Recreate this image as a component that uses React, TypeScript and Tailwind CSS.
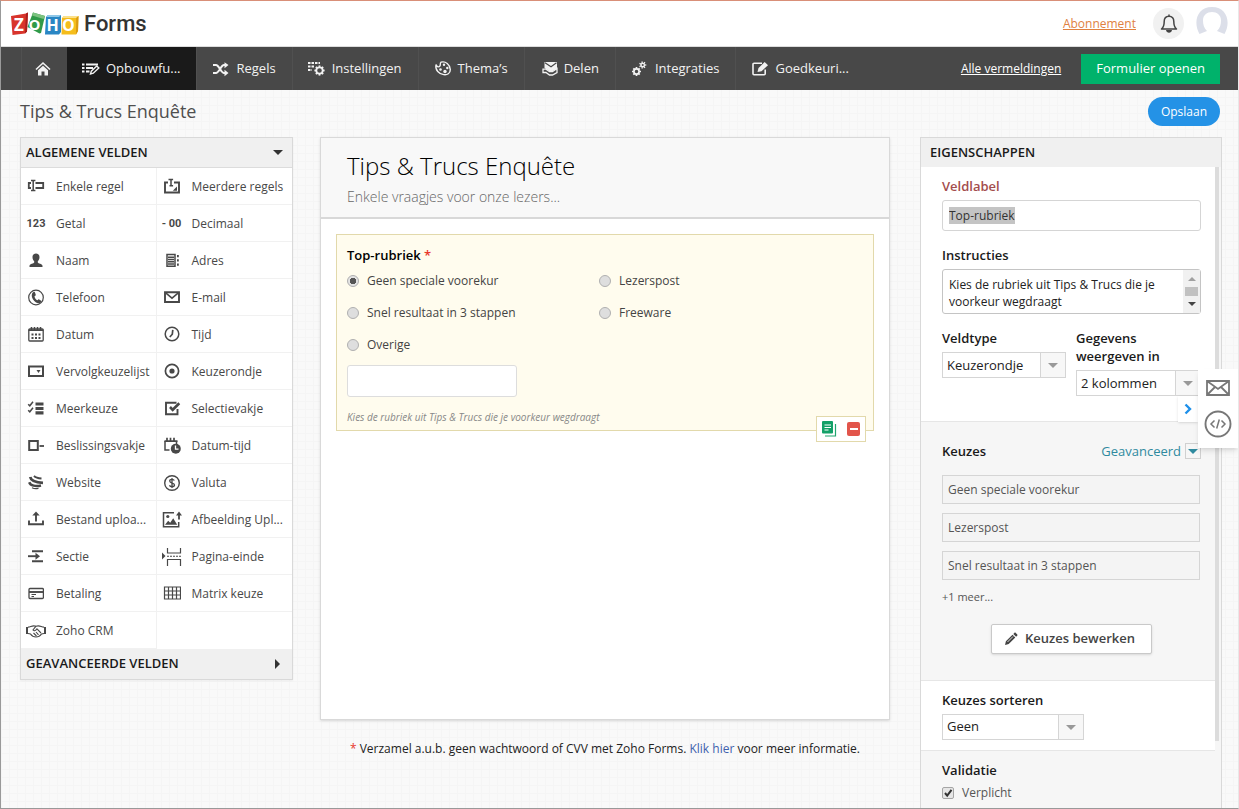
import { useEffect, useRef } from 'react'
import type { ReactNode } from 'react'

const Svg = ({ children, w = 18, h = 18 }: { children: ReactNode; w?: number; h?: number }) => (
  <svg width={w} height={h} viewBox={`0 0 ${w} ${h}`} fill="none" stroke="currentColor" strokeWidth="1.5" aria-hidden="true">
    {children}
  </svg>
)

const solid = { fill: 'currentColor', stroke: 'none' }

const icons: Record<string, ReactNode> = {
  line: (
    <Svg>
      <path d="M4 5H1.800v5H4M8.500 5h7.700v5H8.500" strokeWidth="1.800" />
      <path d="M4 2.500h4.400M4 12.500h4.400M6.200 2.500v10" strokeWidth="1.500" />
    </Svg>
  ),
  lines: (
    <Svg>
      <path d="M5 4.500H2v10h14v-10h-5" strokeWidth="1.900" />
      <path d="M5.500 1.500h4.600M6.500 7.800h3.600M8 1.500v6.300" strokeWidth="1.500" />
      <path d="M14 8.500v4.200H9.800z" {...solid} />
    </Svg>
  ),
  number: <span className="font-['Liberation_Sans_Narrow','Roboto',sans-serif] text-[11px] leading-4 font-bold">123</span>,
  decimal: <span className="font-['Liberation_Sans_Narrow','Roboto',sans-serif] text-[11px] leading-4 font-bold whitespace-pre">- 00</span>,
  name: (
    <Svg>
      <path {...solid} d="M9 1.500c2.400 0 3.500 1.700 3.500 3.800 0 1.700-.8 3-1.700 3.900v1.300c.4 1 4.200 1.300 4.700 3.200v1.300h-13v-1.300c.5-1.900 4.300-2.200 4.700-3.200V9.200C6.300 8.300 5.500 7 5.500 5.300 5.500 3.200 6.600 1.500 9 1.500z" />
    </Svg>
  ),
  address: (
    <Svg>
      <path d="M4 2.500h8v11.700H4zM5 5.200h6M5 7.600h6M5 9.800h6M5 12h6" />
      <path {...solid} d="M14 3h1.800v2.200H14zM14 7.300h1.800v2.200H14zM14 11.500h1.800v2.200H14z" />
    </Svg>
  ),
  phone: (
    <Svg>
      <circle cx="9" cy="8.500" r="7.300" strokeWidth="1.200" />
      <path {...solid} d="M7 2.800c-1.900.8-2.700 2.900-2 5.500.8 2.900 3.300 5.400 6 5.900 1.500.2 2.600-.4 3.100-1.500.2-.5.100-.9-.3-1.200l-1.600-1.100c-.4-.2-.8-.1-1.100.3l-.6.600c-1.600-.5-2.900-2.200-3-4.100l.8-.4c.5-.3.600-.7.400-1.200L7.900 3.200c-.2-.4-.5-.6-.9-.4z" />
    </Svg>
  ),
  mail: (
    <Svg>
      <path d="M2 3.200h14v9.800H2z" strokeWidth="1.900" />
      <path d="M3 4.200l6 5 6-5" strokeWidth="1.500" />
    </Svg>
  ),
  date: (
    <Svg>
      <rect x="1.800" y="3" width="14.400" height="12" rx="1" strokeWidth="1.300" />
      <path d="M1.500 4.200h15M4.500 1v3M7.500 1v3M10.500 1v3M13.500 1v3" strokeWidth="1.600" />
      <path d="M4.500 8.500h9.500M4.500 12h9.500" strokeWidth="2" strokeDasharray="2 1.500" />
    </Svg>
  ),
  time: (
    <Svg>
      <circle cx="9" cy="8" r="6.800" />
      <path d="M9.800 3.800l-.5 4.400-2.500 2.800" strokeWidth="1.700" />
    </Svg>
  ),
  dropdown: (
    <Svg>
      <path d="M2 3.500h14V13H2z" strokeWidth="2" />
      <path {...solid} d="M9.500 7h4l-2 3z" />
    </Svg>
  ),
  radio: (
    <Svg>
      <circle cx="9" cy="8" r="6.600" strokeWidth="1.700" />
      <circle cx="9" cy="8" r="2.600" {...solid} />
    </Svg>
  ),
  multi: (
    <Svg>
      <path d="M1.200 4.200l1.600 1.600 3.200-4M1.200 10.200l1.600 1.600 3.200-4" />
      <path d="M8.500 4h8M8.500 8.500h8M8.500 12.800h8" strokeWidth="3.200" />
    </Svg>
  ),
  check: (
    <Svg>
      <path d="M14.500 9v5.200H3V2.700h10.500" strokeWidth="1.900" />
      <path d="M7 7l2.700 2.800L16.300 3.300" strokeWidth="2.600" />
    </Svg>
  ),
  decision: (
    <Svg>
      <path d="M2.200 4h8.600v9H2.200z" strokeWidth="2" />
      <path d="M12.500 9h4.500" strokeWidth="1.800" />
    </Svg>
  ),
  datetime: (
    <Svg>
      <path d="M6.500 13H2V4M13.500 4v3" />
      <path d="M1.500 4.200h13M4 .8v3.500M7.500.8v3.500M11 .8v3.500" strokeWidth="1.700" />
      <circle cx="12.800" cy="11.800" r="5" {...solid} />
      <path d="M12.500 8.500v3.700h3" stroke="#fff" strokeWidth="1.300" />
    </Svg>
  ),
  website: (
    <Svg>
      <path d="M3.200 3c.8 4 5.500 5.500 12.800 5.800" strokeWidth="2.800" />
      <path d="M2.200 8.200c1.300 3.500 6.500 4.600 11.800 3.300" strokeWidth="2.500" />
      <path d="M7 1.800c1.500 1.700 4.500 2.500 7.500 2.700" strokeWidth="1.900" />
      <path d="M5 13.700c2 1 4.500 1.200 6.500.5" strokeWidth="1.200" />
    </Svg>
  ),
  currency: (
    <Svg>
      <circle cx="9" cy="9" r="7.300" strokeWidth="1.400" />
      <path d="M11.300 6.600c-.4-.9-1.300-1.200-2.300-1.200-1.300 0-2.300.6-2.300 1.700 0 2.500 4.800 1.300 4.800 3.900 0 1.100-1.100 1.700-2.500 1.700-1.200 0-2.200-.5-2.500-1.500M9 4v10" strokeWidth="1.300" />
    </Svg>
  ),
  upload: (
    <Svg>
      <path d="M2 9.500v3.700h14V9.500" strokeWidth="1.900" />
      <path d="M9 3v7.500" strokeWidth="1.900" />
      <path {...solid} d="M9 .5l3.700 4H5.300z" />
    </Svg>
  ),
  image: (
    <Svg w={20}>
      <path d="M12 1.800H1.500v14h15.200V11" />
      <circle cx="5.800" cy="5.500" r="1.600" {...solid} />
      <path {...solid} d="M3 13.800l3.200-4 2 2 3-4.500 4 6.500zM17 .5l3 3.900h-6z" />
      <path d="M17 3v5.500" strokeWidth="1.800" />
    </Svg>
  ),
  section: (
    <Svg>
      <path d="M5 3.200h11M5 13.200h11" strokeWidth="1.900" />
      <path d="M1 8.200h10" strokeWidth="1.900" />
      <path {...solid} d="M8.500 4.700L13 8.200l-4.500 3.500z" />
    </Svg>
  ),
  pagebreak: (
    <Svg w={20}>
      <path {...solid} d="M0 4.500L3.500 8 0 11.500z" />
      <path d="M5.500 0v5h13V0M5.500 18v-6.500h13V18" strokeWidth="1.200" />
      <path d="M5 8.200h15" strokeDasharray="2 1" strokeWidth="1.100" />
    </Svg>
  ),
  payment: (
    <Svg w={16}>
      <rect x="1" y="3.500" width="14.400" height="10" rx="1" strokeWidth="1.300" />
      <path d="M1 7h14.400" strokeWidth="1.900" />
      <path d="M3.500 9.500H8M3.500 11.500H6" strokeWidth="1" />
    </Svg>
  ),
  matrix: (
    <Svg>
      <path d="M1.500 2h16v12h-16zM1.500 6h16M1.500 10h16M5.500 2v12M9.500 2v12M13.500 2v12" strokeWidth="1.200" />
    </Svg>
  ),
  crm: (
    <Svg w={20}>
      <path d="M1 5v7M19 5v7" strokeWidth="2" />
      <path d="M2 5.200C5 5 6 3 10 4.200 14 3 15 5 18 5.200M2 11.500l2.500.5c1 1.500 3 3 5.500 3s4.500-1.500 5.500-3l2.500-.5" strokeWidth="1.200" />
      <path d="M10 4.200L7 8c1.200 1.500 3 .5 4-1.200l4 4.200M7.500 11l3 3M10 10l2.500 2.800" strokeWidth="1.100" />
    </Svg>
  ),
}

const fields: [string, string][] = [
  ['line', 'Enkele regel'],
  ['lines', 'Meerdere regels'],
  ['number', 'Getal'],
  ['decimal', 'Decimaal'],
  ['name', 'Naam'],
  ['address', 'Adres'],
  ['phone', 'Telefoon'],
  ['mail', 'E-mail'],
  ['date', 'Datum'],
  ['time', 'Tijd'],
  ['dropdown', 'Vervolgkeuzelijst'],
  ['radio', 'Keuzerondje'],
  ['multi', 'Meerkeuze'],
  ['check', 'Selectievakje'],
  ['decision', 'Beslissingsvakje'],
  ['datetime', 'Datum-tijd'],
  ['website', 'Website'],
  ['currency', 'Valuta'],
  ['upload', 'Bestand uploa...'],
  ['image', 'Afbeelding Upl...'],
  ['section', 'Sectie'],
  ['pagebreak', 'Pagina-einde'],
  ['payment', 'Betaling'],
  ['matrix', 'Matrix keuze'],
  ['crm', 'Zoho CRM'],
]

const gear = (cx: number, cy: number, r: number, teeth: number, width: number) => (
  <>
    <circle cx={cx} cy={cy} r={r} strokeWidth={width} />
    {Array.from({ length: teeth }, (_, i) => {
      const a = (i * 2 * Math.PI) / teeth
      const x = Math.cos(a)
      const y = Math.sin(a)
      return <path key={i} strokeWidth={width} d={`M${cx + x * r} ${cy + y * r}L${cx + x * (r + 1.9)} ${cy + y * (r + 1.9)}`} />
    })}
  </>
)

const navItems: { label: string; active?: boolean; icon: ReactNode }[] = [
  {
    label: 'Opbouwfu...',
    active: true,
    icon: (
      <Svg>
        <path d="M4 4.500h12M4 8h7M4 11.500h3.500" strokeWidth="1.900" />
        <path {...solid} d="M0 3.500h2.500v2H0zM0 7h2.500v2H0zM0 10.500h2.500v2H0z" />
        <path d="M8.500 14l.8-2.800L14.800 6l2 2-5.500 5.200z" strokeWidth="1.400" />
      </Svg>
    ),
  },
  {
    label: 'Regels',
    icon: (
      <Svg>
        <path d="M1 5h3c3 0 5 8 8 8h2M1 13h3c3 0 5-8 8-8h2" strokeWidth="2.100" />
        <path {...solid} d="M12.500 2.200L16.500 5l-4 3.200zM12.500 9.800l4 3.200-4 3.200z" />
      </Svg>
    ),
  },
  {
    label: 'Instellingen',
    icon: (
      <Svg>
        <path d="M0 3h12M0 6.500h6M0 10h4" strokeDasharray="2.500 1" strokeWidth="2" />
        {gear(11.500, 10.500, 3.200, 8, 1.800)}
      </Svg>
    ),
  },
  {
    label: 'Thema’s',
    icon: (
      <Svg>
        <path d="M7 2.200C11.500.8 16 4.500 16.300 9.500c.1 4-3.200 5.600-6.500 5.100C5 13.800 1 10.300 2 4.500c1 3 3 2.800 4 1.300.8-1.200-.3-2.600 1-3.600z" strokeWidth="1.400" />
        <circle cx="10" cy="4.800" r="1.200" {...solid} />
        <circle cx="13.300" cy="8" r="1.200" {...solid} />
        <circle cx="6.500" cy="9.500" r="1.300" {...solid} />
        <circle cx="11" cy="11.500" r="1.700" {...solid} />
      </Svg>
    ),
  },
  {
    label: 'Delen',
    icon: (
      <Svg>
        <path {...solid} d="M4.500 2H17v7l-4 2H9L4.500 8z" />
        <path d="M5 2.800l6 4 5.500-4" stroke="#484848" strokeWidth="1.100" />
        <path d="M3 9.200h3l3.500 2.500h3L17 8.500v4L12.500 15h-3L6 12.500H3z" strokeWidth="1.300" />
      </Svg>
    ),
  },
  {
    label: 'Integraties',
    icon: (
      <Svg>
        {gear(5.500, 11.500, 2.600, 8, 1.700)}
        {gear(11.700, 5, 1.700, 7, 1.300)}
      </Svg>
    ),
  },
  {
    label: 'Goedkeuri...',
    icon: (
      <Svg>
        <path d="M14.200 9.500v4.300a1 1 0 0 1-1 1H3a1 1 0 0 1-1-1v-9.500a1 1 0 0 1 1-1h8" strokeWidth="1.600" />
        <path {...solid} d="M6.500 12l1-4L13.700 2 17 5.200l-6.500 6.100z" />
      </Svg>
    ),
  },
]

const ZohoLogo = () => (
  <svg width="68" height="24" viewBox="0 0 68 24" role="img" aria-label="Zoho" className="overflow-visible font-['Open_Sans',sans-serif] font-bold">
    <path d="M0 4l15-2.500 2-1-1 19-2 2L1.500 23z" fill="#d8342c" />
    <path d="M15 1.500l2-1-1 19-2 2z" fill="#a81f1c" />
    <path d="M22 .5l12 3.500-4 17-1.500.5L16.500 15z" fill="#2f9a48" />
    <path d="M22 .5L34 4l-1.500 3L21 3.500z" fill="#7cc27f" />
    <path d="M35 5l2-2h13v17l-2 2.500H34z" fill="#2a86c4" />
    <path d="M35 5l2-2h13l-2 2z" fill="#8fc7e8" />
    <path d="M51 6l2-2h14.500l-.5 15-2 3.500H50.500z" fill="#f5bd1c" />
    <path d="M51 6l2-2h14.500l-2.300 2z" fill="#fbe08a" />
    <path d="M67.500 4l-.5 15-2 3.500.2-16.500z" fill="#d99a10" />
    <text x="3" y="18.500" fontSize="17" fill="#fff">Z</text>
    <text x="17.500" y="17.500" fontSize="15" fill="#fff">O</text>
    <text x="35.500" y="19" fontSize="16" fill="#fff">H</text>
    <text x="51" y="19" fontSize="16" fill="#fff">O</text>
  </svg>
)

const Triangle = ({ className = '' }: { className?: string }) => (
  <svg width="10" height="5" viewBox="0 0 10 5" className={className} aria-hidden="true">
    <path d="M0 0h10L5 5z" fill="currentColor" />
  </svg>
)

const Select = ({ id, value, className }: { id: string; value: string; className: string }) => (
  <div className={`relative h-[26px] border border-[#d5d5d5] bg-white ${className}`}>
    <select id={id} className="h-full w-full appearance-none pl-1 text-[13px] text-[#222] outline-none">
      <option>{value}</option>
    </select>
    <span className="pointer-events-none absolute inset-y-0 right-0 flex w-[25px] items-center justify-center border-l border-[#d5d5d5] bg-[#f7f7f7]">
      <Triangle className="text-[#999]" />
    </span>
  </div>
)

const Choice = ({ label, checked }: { label: string; checked?: boolean }) => (
  <label className="flex h-8 items-center gap-2 pt-px text-[12px] text-[#444]">
    <input
      type="radio"
      name="rubriek"
      defaultChecked={checked}
      className="size-3 appearance-none rounded-full border border-[#b0b0b0] bg-[#dedede] checked:bg-[radial-gradient(circle,#555_0_3px,#e3e3e3_3px)]"
    />
    {label}
  </label>
)

const FieldList = () => (
  <aside className="w-[273px] shrink-0 border border-[#d9d9d9] bg-white shadow-xs">
    <button className="flex h-[30px] w-full items-center justify-between border-b border-[#dcdcdc] bg-[#f0f0f0] pr-[9px] pl-[5px] text-[13px] font-semibold text-[#1a1a1a]">
      ALGEMENE VELDEN
      <Triangle className="text-[#333]" />
    </button>
    <ul className="grid grid-cols-2">
      {fields.map(([icon, label]) => (
        <li key={label} className="h-[37px] border-b border-[#f1f1f1] odd:border-r">
          <button className="flex h-full w-full items-center gap-2.5 pt-px pl-[5px] text-left text-[12px] whitespace-nowrap text-[#484848]">
            <span className="flex w-5 shrink-0 justify-center">{icons[icon]}</span>
            {label}
          </button>
        </li>
      ))}
    </ul>
    <button className="flex h-[30px] w-full items-center justify-between bg-[#f0f0f0] pr-3 pl-[5px] text-[13px] font-semibold text-[#1a1a1a]">
      GEAVANCEERDE VELDEN
      <svg width="5" height="10" viewBox="0 0 5 10" aria-hidden="true">
        <path d="M0 0v10l5-5z" fill="#333" />
      </svg>
    </button>
  </aside>
)

const FormPreview = () => (
  <section className="min-w-0 flex-1">
    <div className="h-[583px] border border-[#d9d9d9] bg-white shadow-sm">
      <div className="border-b-2 border-[#d8d8d8] bg-[#f8f8f8] px-[26px] pt-[11px] pb-2">
        <h2 className="text-[24px] leading-[34px] font-light text-black">Tips &amp; Trucs Enquête</h2>
        <p className="pt-0.5 text-[14px] leading-6 font-light text-[#666]">Enkele vraagjes voor onze lezers...</p>
      </div>
      <div className="relative mx-[15px] mt-[15px] border border-[#e2d9ab] bg-[#fffcee] px-2.5 pt-[11px] pb-[5px]">
        <fieldset>
          <legend className="text-[13px] leading-[18px] font-semibold text-black">
            Top-rubriek <span className="text-[#e8372c]">*</span>
          </legend>
          <div className="grid w-[504px] max-w-full grid-cols-2">
            <Choice label="Geen speciale voorekur" checked />
            <Choice label="Lezerspost" />
            <Choice label="Snel resultaat in 3 stappen" />
            <Choice label="Freeware" />
            <Choice label="Overige" />
          </div>
        </fieldset>
        <input aria-label="Overige" className="mt-[5px] h-8 w-[170px] rounded-[3px] border border-[#ddd] bg-white px-2 text-[12px]" />
        <p className="mt-3 text-[10px] leading-4 text-[#888] italic">Kies de rubriek uit Tips &amp; Trucs die je voorkeur wegdraagt</p>
        <div className="absolute right-[7px] -bottom-3 flex h-[26px] w-[50px] items-center justify-between border border-[#e2d9ab] bg-white px-[5px]">
          <button aria-label="Dupliceren">
            <Svg w={16} h={16}>
              <path d="M13.500 3v12H3" stroke="#1fa56e" strokeWidth="1.200" />
              <rect width="11" height="12.500" rx="1" fill="#12a067" stroke="none" />
              <path d="M2.500 4H9M2.500 6.500H9M2.500 9H6.500" stroke="#fff" strokeWidth="1.200" />
            </Svg>
          </button>
          <button aria-label="Verwijderen" className="flex h-3.5 w-[13px] items-center justify-center rounded-[2px] bg-[#e2554b]">
            <span className="h-0.5 w-2 bg-white" />
          </button>
        </div>
      </div>
    </div>
    <p className="pt-5 text-center text-[12px] leading-[18px] text-[#222]">
      <span className="text-[#e8372c]">*</span> Verzamel a.u.b. geen wachtwoord of CVV met Zoho Forms.{' '}
      <a href="#info" className="text-[#3f62ad]">Klik hier</a> voor meer informatie.
    </p>
  </section>
)

const Properties = () => {
  const labelRef = useRef<HTMLInputElement>(null)

  useEffect(() => {
    labelRef.current?.focus()
    labelRef.current?.select()
  }, [])

  return (
    <aside className="w-[302px] shrink-0 self-stretch overflow-hidden border border-b-0 border-[#d9d9d9] bg-[#f6f6f6]">
      <h3 className="flex h-[29px] items-center bg-[#f0f0f0] pl-[9px] text-[13px] font-semibold text-[#1a1a1a]">EIGENSCHAPPEN</h3>
      <div className="relative pr-1.5 text-[13px] font-semibold text-[#1a1a1a]">
        <span className="absolute top-0 right-0.5 h-[574px] w-1 bg-[#dcdcdc]" />

        <div className="h-[254px] bg-white px-[21px] pt-2.5">
          <label htmlFor="label" className="block leading-[18px] text-[#a34d4d]">Veldlabel</label>
          <input
            id="label"
            ref={labelRef}
            defaultValue="Top-rubriek"
            className="mt-[5px] block h-[31px] w-[259px] rounded-[3px] border border-[#d5d5d5] bg-white px-1.5 text-[12px] font-normal text-[#333] outline-none selection:bg-[#c4c4c4] selection:text-[#333]"
          />

          <label htmlFor="help" className="mt-[15px] block leading-[18px]">Instructies</label>
          <div className="relative mt-[5px] h-[45px] w-[259px]">
            <textarea
              id="help"
              defaultValue="Kies de rubriek uit Tips & Trucs die je voorkeur wegdraagt"
              className="h-full w-full resize-none overflow-hidden rounded-[3px] border border-[#c4c4c4] bg-white py-1.5 pr-8 pl-1.5 text-[12px] leading-[17px] font-normal text-[#222] outline-none"
            />
            <span className="absolute inset-y-px right-px flex w-[17px] flex-col items-center justify-between bg-[#f1f1f1] py-[7px]">
              <svg width="8" height="4" viewBox="0 0 8 4" aria-hidden="true"><path d="M0 4h8L4 0z" fill="#a0a0a0" /></svg>
              <span className="h-[9px] w-[13px] bg-[#c1c1c1]" />
              <svg width="8" height="4" viewBox="0 0 8 4" aria-hidden="true"><path d="M0 0h8L4 4z" fill="#444" /></svg>
            </span>
          </div>

          <div className="mt-[15px] flex gap-2.5 leading-[18px]">
            <div>
              <label htmlFor="type" className="block pb-[5px]">Veldtype</label>
              <Select id="type" value="Keuzerondje" className="w-[124px] font-normal" />
            </div>
            <div>
              <label htmlFor="columns" className="block pb-[5px]">Gegevens<br />weergeven in</label>
              <Select id="columns" value="2 kolommen" className="w-[125px] font-normal" />
            </div>
          </div>
        </div>

        <div className="h-[259px] border-t border-[#e6e6e6] px-[21px] pt-5">
          <div className="flex w-[259px] items-center leading-[18px]">
            Keuzes
            <button className="ml-auto flex items-center gap-1 font-normal text-[#2f8a9f]">
              Geavanceerd
              <span className="flex size-4 items-center justify-center border border-[#d0d0d0]"><Triangle /></span>
            </button>
          </div>
          <ul className="mt-[15px] flex w-[258px] flex-col gap-[9px] text-[12px] font-normal text-[#555]">
            {['Geen speciale voorekur', 'Lezerspost', 'Snel resultaat in 3 stappen'].map((item) => (
              <li key={item} className="flex h-[29px] items-center border border-[#d5d5d5] bg-[#f4f4f4] pl-[5px]">{item}</li>
            ))}
          </ul>
          <p className="mt-2 text-[11px] leading-[18px] font-normal text-[#555]">+1 meer...</p>
          <div className="w-[259px]">
            <button className="mx-auto mt-[18px] flex h-[30px] w-[161px] items-center justify-center gap-[7px] rounded-[2px] border border-[#c9c9c9] bg-white pr-1 text-[#444] shadow-sm">
              <Svg w={14} h={14}>
                <path {...solid} d="M1 13l.9-3.700L8.500 2.700l2.800 2.800-6.600 6.600zM9.300 1.900l1-1c.5-.5 1-.4 1.500 0L13.100 2.200c.5.5.5 1 0 1.500l-1 1z" />
                <path d="M3.500 10L9 4.500" stroke="#fff" strokeWidth=".8" />
              </Svg>
              Keuzes bewerken
            </button>
          </div>
        </div>

        <div className="h-[71px] border-y border-[#e6e6e6] bg-white px-[21px] pt-2.5">
          <label htmlFor="sort" className="block pb-[5px] leading-[18px]">Keuzes sorteren</label>
          <Select id="sort" value="Geen" className="w-[142px] font-normal" />
        </div>

        <div className="px-[21px] pt-2.5 pb-2">
          <h4 className="leading-[18px]">Validatie</h4>
          <label className="mt-[5px] flex items-center gap-2 text-[12px] leading-[18px] font-normal text-[#555]">
            <span className="relative size-3">
              <input type="checkbox" defaultChecked className="peer block size-3 appearance-none rounded-[2px] border border-[#a5a5a5] bg-[#e6e6e6]" />
              <svg viewBox="0 0 12 12" className="pointer-events-none absolute inset-0 hidden peer-checked:block" aria-hidden="true">
                <path d="M3 6l2.200 2.700L9.500 2.800" fill="none" stroke="#333" strokeWidth="2" />
              </svg>
            </span>
            Verplicht
          </label>
        </div>
      </div>
    </aside>
  )
}

const App = () => {
  return (
    <div className="relative flex h-screen flex-col overflow-hidden border border-t-[#d98f78] border-r-[#e8e8e8] border-b-[#999] border-l-[#999] bg-[#f9f9f9] bg-[linear-gradient(#f5f5f5_1px,transparent_1px),linear-gradient(90deg,#f5f5f5_1px,transparent_1px)] bg-[size:8px_8px] font-['Open_Sans',sans-serif]">
      <header className="flex h-[46px] shrink-0 items-center border-b border-[#ddd] bg-white px-2.5">
        <ZohoLogo />
        <span className="pl-[5px] font-['Roboto',sans-serif] text-[22px] font-medium text-[#333]">Forms</span>
        <a href="#abonnement" className="mr-[17px] ml-auto text-[12px] text-[#e0813f] underline">Abonnement</a>
        <button aria-label="Meldingen" className="mr-3 flex size-[31px] items-center justify-center rounded-full bg-[#f1f1f1] text-[#444]">
          <Svg w={18} h={20}>
            <path d="M9 2.200c-3.300 0-4.800 2.300-4.800 5.300 0 4-.9 6-2.700 7.500h15c-1.800-1.500-2.700-3.500-2.700-7.500 0-3-1.500-5.300-4.800-5.300zM9 .5v2" strokeLinejoin="round" />
            <path {...solid} d="M6 16h6c-.3 1.700-1.500 2.700-3 2.700S6.300 17.700 6 16z" />
          </Svg>
        </button>
        <button aria-label="Profiel" className="pb-1.5">
          <svg width="32" height="27" viewBox="0 0 32 27" aria-hidden="true">
            <path fill="#dcdfe9" d="M3.500 27C-3 16 .5 0 16 0s19 16 12.500 27l-7.500-3c3-3 4-6.500 4-10.500C25 8 21 5 16 5S7 8 7 13.500c0 4 1 7.500 4 10.500z" />
          </svg>
        </button>
      </header>

      <nav className="flex h-[43px] shrink-0 items-stretch bg-[#484848] pr-[18px] pl-5 text-[13px] text-[#f2f2f2]">
        <a href="#home" aria-label="Home" className="flex w-[46px] items-center justify-center border-l border-[#505050] pr-1">
          <Svg w={16} h={16}>
            <path d="M1 8.500L8 2l7 6.500" strokeWidth="1.600" />
            <path {...solid} d="M3 9.300l5-4.500 5 4.500v5.200H9.500V10.500h-3v4H3z" />
          </Svg>
        </a>
        {navItems.map(({ label, active, icon }) => (
          <a
            key={label}
            href={`#${label}`}
            className={`flex items-center gap-1.5 border-r border-[#505050] pr-4 pl-[15px] whitespace-nowrap last-of-type:border-r-0 ${active ? 'bg-[#1a1a1a]' : ''}`}
          >
            {icon}
            {label}
          </a>
        ))}
        <div className="ml-auto flex items-center gap-5">
          <button className="text-[12px] whitespace-nowrap text-white underline">Alle vermeldingen</button>
          <button className="h-[30px] bg-[#00b26b] px-[15px] text-[13px] whitespace-nowrap text-white">Formulier openen</button>
        </div>
      </nav>

      <div className="flex h-[47px] shrink-0 items-center justify-between pr-[18px] pb-1 pl-[19px]">
        <h1 className="text-[18px] text-[#4f4f4f]">Tips &amp; Trucs Enquête</h1>
        <button className="h-[29px] rounded-full bg-[#2492e6] px-[13px] text-[12px] text-white">Opslaan</button>
      </div>

      <main className="flex min-h-0 flex-1 items-start pr-4 pl-[19px]">
        <FieldList />
        <div className="flex min-w-0 flex-1 pr-[30px] pl-[27px]">
          <FormPreview />
        </div>
        <Properties />
      </main>

      {/* Feedback drawer docked on the right edge */}
      <div className="absolute top-[368px] right-0 flex items-end">
        <button aria-label="Inklappen" className="mb-[26px] flex h-[26px] w-5 items-center justify-center bg-white text-[#1e90ea] shadow-sm">
          <Svg w={8} h={12}>
            <path d="M1.500 1.500L6 6l-4.500 4.500" strokeWidth="2.400" />
          </Svg>
        </button>
        <div className="flex h-[79px] w-10 flex-col items-center justify-center gap-3.5 bg-white text-[#777] shadow-md">
          <button aria-label="Contact">
            <Svg w={24} h={16}>
              <path d="M1 1h22v14H1zM1 1l11 8L23 1M1 15l8-8M23 15l-8-8" strokeWidth="1.800" />
            </Svg>
          </button>
          <button aria-label="Code">
            <Svg w={28} h={28}>
              <circle cx="14" cy="14" r="12.500" strokeWidth="1.900" />
              <path d="M10.500 10.500L7 14l3.500 3.500M17.500 10.500L21 14l-3.500 3.500M15.300 9.500l-2.600 9" />
            </Svg>
          </button>
        </div>
      </div>
    </div>
  )
}

export default App
